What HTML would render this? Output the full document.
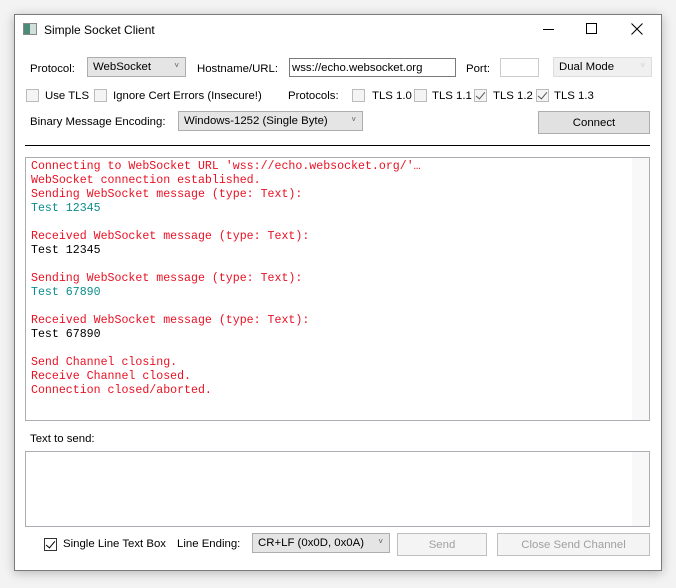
<!DOCTYPE html>
<html><head><style>
*{margin:0;padding:0;box-sizing:border-box}
body{width:676px;height:588px;background:#f3f3f3;position:relative;overflow:hidden;font-family:"Liberation Sans",sans-serif;font-size:11.4px;color:#000}
.win{position:absolute;left:14px;top:14px;width:648px;height:557px;background:#fff;border:1px solid #7a7a7a;box-shadow:0 2px 10px rgba(0,0,0,.25)}
.a{position:absolute;white-space:nowrap}
.l{margin-top:2px}
.cb{position:absolute;width:13px;height:13px;border:1px solid #bbb;background:#f4f4f4}
.cb.on::after{content:"";position:absolute;left:3px;top:0px;width:4px;height:8px;border-right:1.5px solid #555;border-bottom:1.5px solid #555;transform:rotate(40deg)}
.cb.dark{border-color:#333;background:#fff}
.cb.dark::after{border-color:#000}
.combo{position:absolute;height:20px;border:1px solid #adadad;background:#e5e5e5;padding:3px 5px;font-size:11.4px}
.combo .ar{position:absolute;right:6px;top:3px;font-size:8px;color:#555}
.btn{position:absolute;height:23px;border:1px solid #adadad;background:#e1e1e1;text-align:center;line-height:22px}
.dis{background:#f4f4f4;border-color:#bfbfbf;color:#a0a0a0}
.log{position:absolute;left:25px;top:157px;width:625px;height:264px;border:1px solid #abadb3;background:#fff;font-family:"Liberation Mono",monospace;font-size:11.6px;line-height:14px;padding:2px 0 0 5px;color:#e81123}
.t{color:#0a8d8d}.k{color:#000}
.sb{position:absolute;right:0;top:0;width:17px;height:100%;background:#f8f8f8}
</style></head><body>
<div class="win">
<div class="a" style="left:8px;top:8px;width:14px;height:12px;border:1px solid #888;background:#cfe0da"><div style="width:6px;height:10px;background:#4d8a78"></div></div>
<div class="a" style="left:29px;top:8px;font-size:12px">Simple Socket Client</div>
<div class="a" style="left:528px;top:14px;width:11px;height:1px;background:#000"></div>
<div class="a" style="left:571px;top:8px;width:11px;height:11px;border:1px solid #000"></div>
<svg class="a" style="left:616px;top:8px" width="12" height="12"><path d="M0.5 0.5L11.5 11.5M11.5 0.5L0.5 11.5" stroke="#000" stroke-width="1"/></svg>
</div>
<div class="a l" style="left:30px;top:61px">Protocol:</div>
<div class="combo" style="left:87px;top:57px;width:99px">WebSocket<span class="ar">˅</span></div>
<div class="a l" style="left:197px;top:61px">Hostname/URL:</div>
<div class="a" style="left:289px;top:58px;width:167px;height:19px;border:1px solid #7a7a7a;padding:3px 2px">wss://echo.websocket.org</div>
<div class="a l" style="left:466px;top:61px">Port:</div>
<div class="a" style="left:500px;top:58px;width:39px;height:19px;border:1px solid #ccc"></div>
<div class="combo" style="left:553px;top:57px;width:99px;background:#f0f0f0;border-color:#ddd">Dual Mode<span class="ar" style="color:#ccc">˅</span></div>
<div class="cb" style="left:26px;top:89px"></div><div class="a l" style="left:45px;top:88px">Use TLS</div>
<div class="cb" style="left:94px;top:89px"></div><div class="a l" style="left:113px;top:88px">Ignore Cert Errors (Insecure!)</div>
<div class="a l" style="left:288px;top:88px">Protocols:</div>
<div class="cb" style="left:352px;top:89px"></div><div class="a l" style="left:372px;top:88px">TLS 1.0</div>
<div class="cb" style="left:414px;top:89px"></div><div class="a l" style="left:432px;top:88px">TLS 1.1</div>
<div class="cb on" style="left:474px;top:89px"></div><div class="a l" style="left:493px;top:88px">TLS 1.2</div>
<div class="cb on" style="left:536px;top:89px"></div><div class="a l" style="left:554px;top:88px">TLS 1.3</div>
<div class="a l" style="left:30px;top:114px">Binary Message Encoding:</div>
<div class="combo" style="left:178px;top:111px;width:185px">Windows-1252 (Single Byte)<span class="ar">˅</span></div>
<div class="btn" style="left:538px;top:111px;width:112px">Connect</div>
<div class="a" style="left:25px;top:145px;width:625px;height:1px;background:#000"></div>
<div class="log"><div class="sb"></div>Connecting to WebSocket URL 'wss://echo.websocket.org/'…<br>WebSocket connection established.<br>Sending WebSocket message (type: Text):<br><span class="t">Test 12345</span><br><br>Received WebSocket message (type: Text):<br><span class="k">Test 12345</span><br><br>Sending WebSocket message (type: Text):<br><span class="t">Test 67890</span><br><br>Received WebSocket message (type: Text):<br><span class="k">Test 67890</span><br><br>Send Channel closing.<br>Receive Channel closed.<br>Connection closed/aborted.</div>
<div class="a l" style="left:30px;top:431px">Text to send:</div>
<div class="a" style="left:25px;top:451px;width:625px;height:76px;border:1px solid #abadb3"><div class="sb"></div></div>
<div class="cb dark on" style="left:44px;top:538px"></div><div class="a l" style="left:63px;top:536px">Single Line Text Box</div>
<div class="a l" style="left:177px;top:536px">Line Ending:</div>
<div class="combo" style="left:252px;top:533px;width:138px">CR+LF (0x0D, 0x0A)<span class="ar">˅</span></div>
<div class="btn dis" style="left:397px;top:533px;width:90px">Send</div>
<div class="btn dis" style="left:497px;top:533px;width:153px">Close Send Channel</div>
</body></html>
